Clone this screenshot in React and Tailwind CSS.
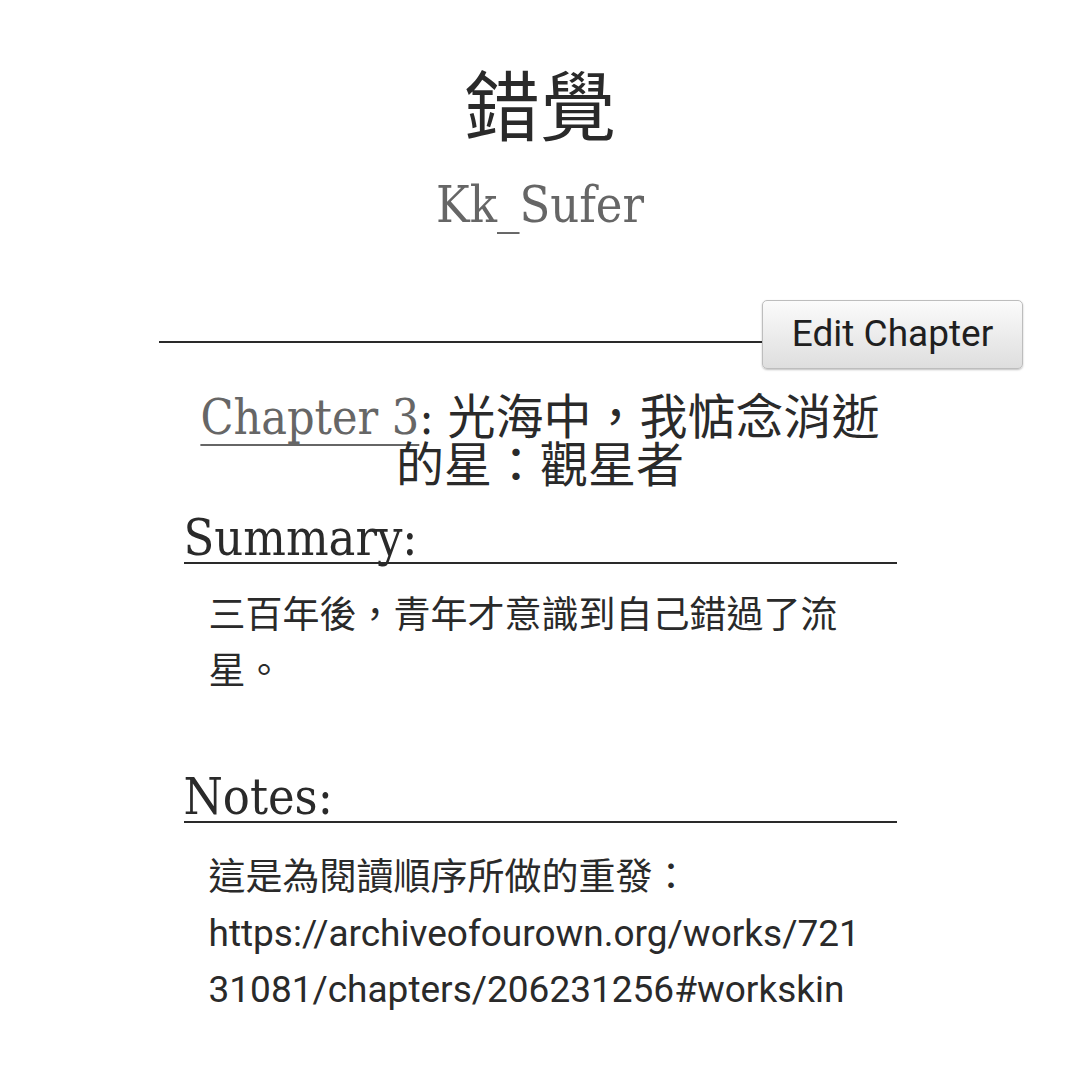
export default function App() {
  const serif = "font-['DejaVu_Serif_Condensed','DejaVu_Serif','Noto_Sans_CJK_TC',serif]";
  const sans = "font-['Roboto','Noto_Sans_CJK_TC',sans-serif]";
  return (
    <div className="min-h-[1079px] w-[1080px] bg-white text-[#2a2a2a]">
      <div className="pt-[64px] flex flex-col items-center">
        <h2 className={`text-[76px] leading-none font-normal font-['Noto_Sans_CJK_TC',serif]`}>錯覺</h2>
        <h3 className={`${serif} mt-[40px] text-[50px] leading-[50px] text-[#666666]`}>Kk_Sufer</h3>
      </div>

      <div className="mt-[70px] ml-[159px] mr-[57px] flex items-start">
        <div className="flex-1 h-[43px] border-b-2 border-[#2a2a2a]" />
        <button className={`${sans} h-[69px] w-[261px] pb-[3px] rounded-[5px] border border-[#bdbdbd] bg-gradient-to-b from-[#fbfbfb] to-[#dedede] shadow-[0_1px_2px_rgba(0,0,0,0.25)] text-[37px] text-[#1f1f1f] leading-none`}>
          Edit Chapter
        </button>
      </div>

      <div className="mx-auto w-[713px]">
        <h3 className={`${serif} mt-[24px] text-center text-[48px] leading-[48px] font-normal`}>
          <a className="text-[#666666] underline decoration-2 underline-offset-[10px]">Chapter 3</a>
          <span>: 光海中，我惦念消逝的星：觀星者</span>
        </h3>

        <h3 className={`${serif} mt-[26px] text-[50px] leading-[47px] border-b-2 border-[#2a2a2a]`}>Summary:</h3>
        <p className={`${sans} mt-[24px] px-[25px] text-[37px] leading-[56px]`}>
          三百年後，青年才意識到自己錯過了流星。
        </p>

        <h3 className={`${serif} mt-[74px] text-[50px] leading-[47px] border-b-2 border-[#2a2a2a]`}>Notes:</h3>
        <div className={`${sans} mt-[27px] px-[25px] text-[37px] leading-[56px] break-all`}>
          <p>這是為閱讀順序所做的重發：</p>
          <p>https://archiveofourown.org/works/72131081/chapters/206231256#workskin</p>
        </div>
      </div>
    </div>
  );
}
